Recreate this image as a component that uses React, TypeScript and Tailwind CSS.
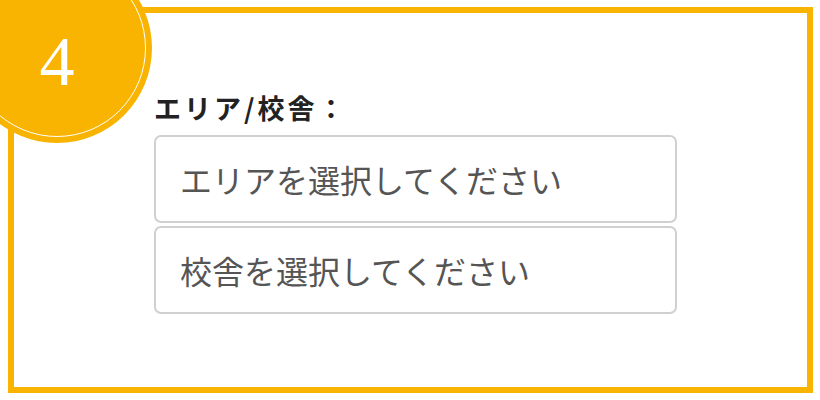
import React from "react";

export default function App() {
  return (
    <div className="relative w-[820px] h-[400px] bg-white overflow-hidden font-['Noto_Sans_CJK_JP','Noto_Sans',sans-serif]">
      <div className="ml-[8px] mt-[7px] w-[805px] h-[386px] border-[6px] border-[#f8b400] bg-white">
        <div className="flex flex-col pl-[140px] pt-[79px]">
          <div className="text-[27px] font-bold leading-[32px] text-[#222] tracking-[3px]">エリア/校舎：</div>
          <div className="mt-[11px] flex flex-col gap-[3px]">
            <div className="w-[523px] h-[88px] border-2 border-[#d0d0d0] rounded-[7px] flex items-center pl-[24px] text-[32px] text-[#555]">
              エリアを選択してください
            </div>
            <div className="w-[523px] h-[88px] border-2 border-[#d0d0d0] rounded-[7px] flex items-center pl-[24px] text-[32px] text-[#555]">
              校舎を選択してください
            </div>
          </div>
        </div>
      </div>
      <div className="absolute left-[-38px] top-[-47px] w-[190px] h-[190px] rounded-full bg-[#f8b400]">
        <div className="absolute inset-[6px] rounded-full border-[1.5px] border-white"></div>
        <span className="absolute left-[95px] top-[109px] -translate-x-1/2 -translate-y-1/2 text-white text-[70px] leading-none font-['Liberation_Serif','Times_New_Roman',serif]">
          4
        </span>
      </div>
    </div>
  );
}
